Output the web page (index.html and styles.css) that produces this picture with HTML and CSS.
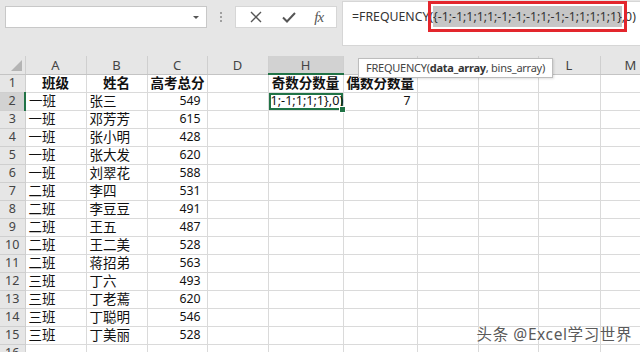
FILE: index.html
```html
<!DOCTYPE html>
<html lang="zh-CN">
<head>
    <meta charset="UTF-8">
    <title>FREQUENCY</title>
    <link rel="stylesheet" href="styles.css">
</head>
<body>
    <div class="app">
        <div class="toolbar">
            <div class="name-box">
                <span class="drop-arrow"></span>
            </div>
            <div class="grip"><i></i><i></i><i></i></div>
            <div class="fx-buttons">
                <svg class="btn-icon" width="14" height="14" viewBox="0 0 14 14">
                    <path d="M2 2 L12 12 M12 2 L2 12" stroke="#555" stroke-width="1.4" fill="none"/>
                </svg>
                <svg class="btn-icon" width="16" height="14" viewBox="0 0 16 14">
                    <path d="M2 7.5 L6 11.5 L14 3" stroke="#555" stroke-width="2" fill="none"/>
                </svg>
                <span class="fx">fx</span>
            </div>
            <div class="formula">=FREQUENCY(<span class="mark"><span class="sel">{-1;-1;1;1;1;-1;-1;-1;1;-1;-1;1;1;1;1}</span></span>,0)</div>
        </div>

        <div class="sheet">
            <table class="grid">
                <colgroup>
                    <col class="w-rh"><col class="w61"><col class="w61"><col class="w60"><col class="w61">
                    <col class="w75"><col class="w74"><col class="w61"><col class="w60"><col class="w62"><col class="w61">
                </colgroup>
                <tr class="col-head">
                    <th class="corner"><span class="tri"></span></th>
                    <th>A</th><th>B</th><th>C</th><th>D</th><th class="active">H</th><th></th><th></th><th></th><th>L</th><th>M</th>
                </tr>
                <tr class="bold">
                    <th>1</th><td>班级</td><td>姓名</td><td>高考总分</td><td></td><td>奇数分数量</td><td>偶数分数量</td><td></td><td></td><td></td><td></td>
                </tr>
                <tr>
                    <th class="active">2</th><td>一班</td><td>张三</td><td class="num">549</td><td></td><td class="editing">1;-1;1;1;1},0)</td><td class="num">7</td><td></td><td></td><td></td><td></td>
                </tr>
                <tr><th>3</th><td>一班</td><td>邓芳芳</td><td class="num">615</td><td></td><td></td><td></td><td></td><td></td><td></td><td></td></tr>
                <tr><th>4</th><td>一班</td><td>张小明</td><td class="num">428</td><td></td><td></td><td></td><td></td><td></td><td></td><td></td></tr>
                <tr><th>5</th><td>一班</td><td>张大发</td><td class="num">620</td><td></td><td></td><td></td><td></td><td></td><td></td><td></td></tr>
                <tr><th>6</th><td>一班</td><td>刘翠花</td><td class="num">588</td><td></td><td></td><td></td><td></td><td></td><td></td><td></td></tr>
                <tr><th>7</th><td>二班</td><td>李四</td><td class="num">531</td><td></td><td></td><td></td><td></td><td></td><td></td><td></td></tr>
                <tr><th>8</th><td>二班</td><td>李豆豆</td><td class="num">491</td><td></td><td></td><td></td><td></td><td></td><td></td><td></td></tr>
                <tr><th>9</th><td>二班</td><td>王五</td><td class="num">487</td><td></td><td></td><td></td><td></td><td></td><td></td><td></td></tr>
                <tr><th>10</th><td>二班</td><td>王二美</td><td class="num">528</td><td></td><td></td><td></td><td></td><td></td><td></td><td></td></tr>
                <tr><th>11</th><td>二班</td><td>蒋招弟</td><td class="num">563</td><td></td><td></td><td></td><td></td><td></td><td></td><td></td></tr>
                <tr><th>12</th><td>三班</td><td>丁六</td><td class="num">493</td><td></td><td></td><td></td><td></td><td></td><td></td><td></td></tr>
                <tr><th>13</th><td>三班</td><td>丁老蔫</td><td class="num">620</td><td></td><td></td><td></td><td></td><td></td><td></td><td></td></tr>
                <tr><th>14</th><td>三班</td><td>丁聪明</td><td class="num">546</td><td></td><td></td><td></td><td></td><td></td><td></td><td></td></tr>
                <tr><th>15</th><td>三班</td><td>丁美丽</td><td class="num">528</td><td></td><td></td><td></td><td></td><td></td><td></td><td></td></tr>
                <tr><th>16</th><td></td><td></td><td></td><td></td><td></td><td></td><td></td><td></td><td></td><td></td></tr>
            </table>

            <div class="tooltip">FREQUENCY(<b>data_array</b>, bins_array)</div>
            <div class="watermark">头条 @Excel学习世界</div>
        </div>
    </div>
</body>
</html>
```

FILE: styles.css
```css
* {
    margin: 0;
    padding: 0;
    box-sizing: border-box;
}

body {
    font-family: "Noto Sans", "Noto Sans CJK SC", sans-serif;
    background: #e6e6e6;
    width: 640px;
    height: 352px;
    overflow: hidden;
}

.app {
    width: 640px;
    height: 352px;
    overflow: hidden;
}

/* formula bar */
.toolbar {
    display: flex;
    align-items: flex-start;
    height: 56px;
    background: #e6e6e6;
    padding-top: 1px;
}

.name-box {
    margin: 5px 0 0 5px;
    width: 202px;
    height: 22px;
    background: #fff;
    border: 1px solid #c8c8c8;
    display: flex;
    align-items: center;
    justify-content: flex-end;
    padding-right: 7px;
}

.drop-arrow {
    width: 0;
    height: 0;
    border-left: 3px solid transparent;
    border-right: 3px solid transparent;
    border-top: 3px solid #555;
}

.grip {
    width: 28px;
    height: 22px;
    margin-top: 5px;
    display: flex;
    flex-direction: column;
    align-items: center;
    justify-content: center;
    gap: 2px;
}

.grip i {
    width: 2px;
    height: 2px;
    background: #a0a0a0;
}

.fx-buttons {
    margin-top: 5px;
    width: 102px;
    height: 22px;
    background: #fff;
    border: 1px solid #d6d6d6;
    display: flex;
    align-items: center;
    justify-content: space-around;
    padding: 0 4px;
}

.fx {
    font-family: "Liberation Serif", serif;
    font-style: italic;
    font-size: 15px;
    color: #555;
    letter-spacing: -1px;
}

.formula {
    margin-left: 5px;
    flex: 1;
    height: 45px;
    background: #fff;
    border: 1px solid #d6d6d6;
    border-right: none;
    padding: 5px 0 0 9px;
    font-size: 12.3px;
    color: #333;
    white-space: nowrap;
    line-height: 20px;
}

.mark {
    outline: 3px solid #e3262d;
    outline-offset: 2px;
    padding: 2px 0;
}

.sel {
    background: #c6c6c6;
    padding: 2px 0;
}

/* worksheet */
.sheet {
    position: relative;
    background: #fff;
    height: 296px;
    overflow: hidden;
}

.grid {
    table-layout: fixed;
    width: 661px;
    border-collapse: collapse;
}

.w-rh { width: 25px; }
.w60 { width: 60px; }
.w61 { width: 61px; }
.w62 { width: 62px; }
.w74 { width: 74px; }
.w75 { width: 75px; }

.grid tr {
    height: 18px;
}

.grid td {
    border: 1px solid #dadada;
    height: 18px;
    padding: 0 3px;
    font-size: 13.5px;
    line-height: 16px;
    color: #111;
    white-space: nowrap;
    overflow: hidden;
}

.grid th {
    background: #e6e6e6;
    border: 1px solid #cfcfcf;
    font-weight: normal;
    font-size: 12.5px;
    color: #444;
    text-align: center;
    line-height: 16px;
}

.grid tr > th:first-child {
    border-left: none;
}

.col-head th {
    border-top: none;
    border-bottom: 1px solid #c4c4c4;
    font-size: 13px;
}

.grid th.active {
    background: #d2d2d2;
}

.col-head th.active {
    border-bottom: 2px solid #217346;
}

.grid tr > th.active:first-child {
    border-right: 2px solid #217346;
}

.corner {
    position: relative;
}

.tri {
    position: absolute;
    right: 3px;
    bottom: 3px;
    width: 0;
    height: 0;
    border-left: 11px solid transparent;
    border-bottom: 11px solid #b4b4b4;
}

.bold td {
    font-weight: bold;
    text-align: center;
}

.grid td.num {
    text-align: right;
    font-size: 12.3px;
    padding-right: 6px;
}

.grid td.editing {
    position: relative;
    box-shadow: inset 0 0 0 2px #217346;
    font-size: 12.6px;
    padding-left: 2px;
    overflow: visible;
}

.editing::after {
    content: "";
    position: absolute;
    right: -3px;
    bottom: -3px;
    width: 5px;
    height: 5px;
    background: #217346;
    border: 1px solid #fff;
}

.tooltip {
    position: absolute;
    left: 358px;
    top: 2px;
    height: 20px;
    padding: 0 7px;
    background: #fff;
    border: 1px solid #bdbdbd;
    box-shadow: 1px 1px 2px rgba(0, 0, 0, 0.12);
    font-size: 11px;
    letter-spacing: -0.25px;
    line-height: 18px;
    color: #444;
    white-space: nowrap;
}

.tooltip b {
    color: #333;
}

.watermark {
    position: absolute;
    right: 8px;
    bottom: 7px;
    font-size: 15.5px;
    letter-spacing: 0.6px;
    color: #5a5a5a;
    text-shadow: 0 0 2px #fff, 0 0 2px #fff;
}
```
